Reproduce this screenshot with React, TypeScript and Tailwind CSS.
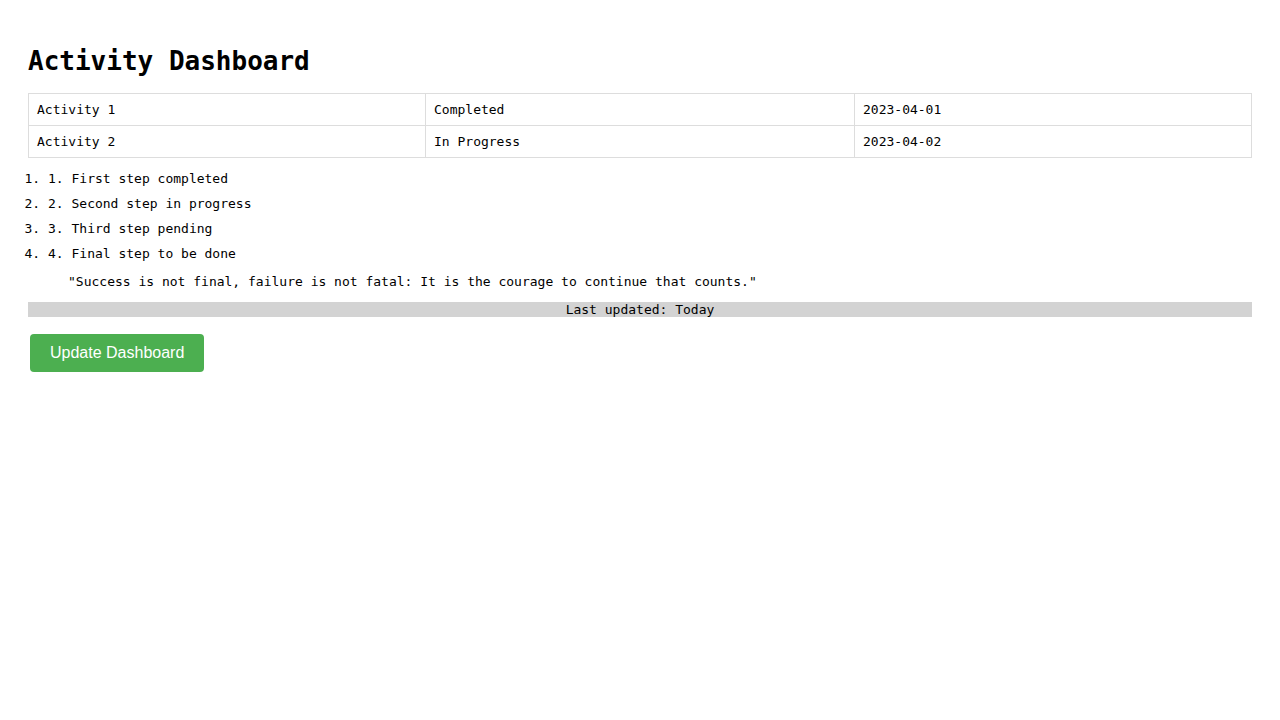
const activities = [
  { name: 'Activity 1', status: 'Completed', date: '2023-04-01' },
  { name: 'Activity 2', status: 'In Progress', date: '2023-04-02' },
]

const steps = [
  '1. First step completed',
  '2. Second step in progress',
  '3. Third step pending',
  '4. Final step to be done',
]

export default function App() {
  return (
    <div className="min-h-screen bg-white text-black font-['DejaVu_Sans_Mono',monospace] text-[13px] leading-[15px] px-[28px] pt-[46px]">
      {/* Header */}
      <h1 className="text-[26px] leading-[30px] font-bold mb-[17px]">Activity Dashboard</h1>

      {/* Activities table */}
      <table className="w-[calc(100%-1px)] table-fixed border-collapse">
        <colgroup>
          <col className="w-[397px]" />
          <col className="w-[429px]" />
          <col className="w-[397px]" />
        </colgroup>
        <tbody>
          {activities.map((a) => (
            <tr key={a.name}>
              <td className="border border-[#dddddd] px-[8px] py-[8px]">{a.name}</td>
              <td className="border border-[#dddddd] px-[8px] py-[8px]">{a.status}</td>
              <td className="border border-[#dddddd] px-[8px] py-[8px]">{a.date}</td>
            </tr>
          ))}
        </tbody>
      </table>

      {/* Steps */}
      <ol className="list-decimal pl-[20px] mt-[13px] flex flex-col gap-[10px]">
        {steps.map((s) => (
          <li key={s}>{s}</li>
        ))}
      </ol>

      <blockquote className="mt-[13px] ml-[40px]">
        "Success is not final, failure is not fatal: It is the courage to continue that counts."
      </blockquote>

      <div className="mt-[13px] bg-[#d3d3d3] text-center">Last updated: Today</div>

      <button className="mt-[17px] ml-[2px] bg-[#4caf50] text-white font-['Liberation_Sans',Arial,sans-serif] text-[16px] leading-[18px] px-[20px] py-[10px] rounded-[4px]">
        Update Dashboard
      </button>
    </div>
  )
}
